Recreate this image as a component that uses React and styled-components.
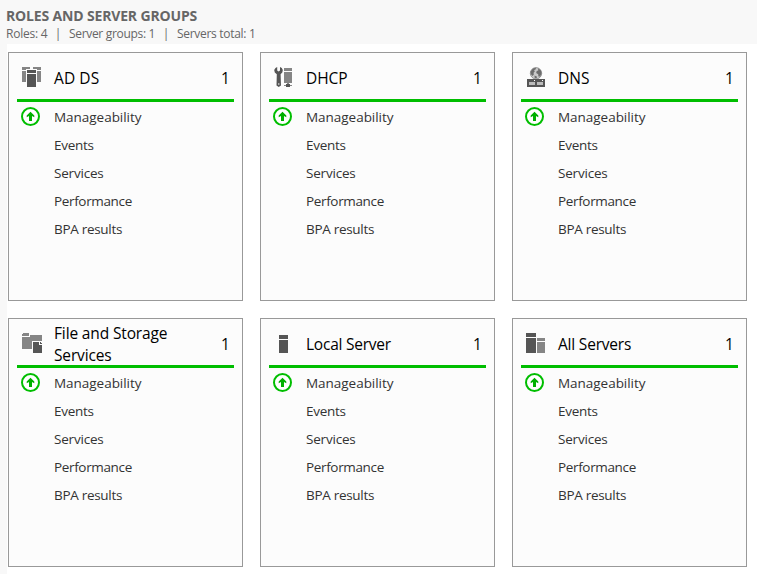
import React from "react";
import styled, { createGlobalStyle } from "styled-components";

const GlobalStyle = createGlobalStyle`
  * { box-sizing: border-box; }
  body {
    margin: 0;
    background: #f8f8f8;
    font-family: "Open Sans", "Noto Sans", sans-serif;
  }
`;

const Page = styled.main`
  width: 757px;
  height: 574px;
  display: flex;
  flex-direction: column;
  overflow: hidden;
`;

const Header = styled.header`
  height: 44px;
  flex: none;
  padding: 7px 0 0 6px;
  color: #666;
`;

const Heading = styled.h1`
  margin: 0;
  font-size: 14px;
  line-height: 18px;
  font-weight: 700;
  letter-spacing: -0.16px;
  white-space: nowrap;
`;

const Summary = styled.div`
  display: flex;
  font-size: 12px;
  line-height: 17px;
  white-space: nowrap;
`;

const Stat = styled.span`
  width: ${(p) => p.$width}px;
  letter-spacing: ${(p) => p.$spacing}px;
`;

const Divider = styled.span`
  width: 22px;
  text-align: center;
  font-size: 12px;
`;

const Board = styled.section`
  flex: 1;
  margin-left: 7px;
  padding: 8px 0 0 1px;
  background: #fff;
  display: grid;
  grid-template-columns: repeat(3, 235px);
  grid-auto-rows: 249px;
  gap: 17px;
  align-content: start;
`;

const Card = styled.article`
  border: 1px solid #999;
  background: #fcfcfc;
  padding: 0 8px;
`;

const CardHeader = styled.div`
  height: 49px;
  border-bottom: 3px solid #00be00;
  display: flex;
  align-items: center;
  color: #000;
  font-size: 15.5px;
  line-height: 22px;
`;

const IconSlot = styled.div`
  width: 37px;
  flex: none;
  padding-left: 4px;
  svg { display: block; }
`;

const RoleSlot = styled(IconSlot)`
  padding: 2px 0 0 5px;
`;

const CardTitle = styled.h2`
  flex: 1;
  margin: 4px 0 0;
  font-size: inherit;
  font-weight: 400;
  white-space: pre-line;
  letter-spacing: ${(p) => p.$spacing}px;
`;

const Count = styled.span`
  width: 13px;
  margin-top: 4px;
`;

const Rows = styled.ul`
  list-style: none;
  margin: 0;
  padding: 1px 0 0;
`;

const Row = styled.li`
  height: 28px;
  display: flex;
  align-items: center;
  color: #333;
  font-size: 13.5px;
  line-height: 20px;
`;

const RowLabel = styled.span`
  letter-spacing: ${(p) => p.$spacing}px;
`;

const Glyph = ({ children }) => (
  <svg width="21" height="22" viewBox="0 0 21 22" shapeRendering="crispEdges">{children}</svg>
);

const DirectoryIcon = () => (
  <Glyph>
    <path fill="#858585" d="M0 1h8v2H4v1H0zM11 1h8v3h-4V3h-4zM0 5h4v11H0zM15 5h4v11h-4z" />
    <path fill="#555" d="M5 4h9v3H5zM5 8h9v13H5z" />
  </Glyph>
);

const ToolsIcon = () => (
  <Glyph>
    <path
      fill="#555"
      shapeRendering="auto"
      d="M1.5 2 3.2 1v3.5l1.4.9L6 4.5V1l1.8 1L8.8 4 8.3 6.5 6.6 8.2 7 19.4 4.7 21 2.5 19.4 2.8 8.2.8 6.5.2 4z"
    />
    <circle cx="4.8" cy="18" r=".8" fill="#eee" shapeRendering="auto" />
    <path fill="#858585" d="M10 2h8v3h-8zM10 6h8v11h-8zM13 17h2v2h-2zM10 19h3v1h-3zM15 19h3v1h-3z" />
    <path fill="#555" d="M12 18h4v3h-4z" />
  </Glyph>
);

const GlobeIcon = () => (
  <Glyph>
    <circle cx="10" cy="7.3" r="5.7" fill="#c8c8c8" stroke="#858585" strokeWidth=".8" shapeRendering="auto" />
    <path
      fill="#6c6c6c"
      shapeRendering="auto"
      d="M4.6 5.5 7 2.5l3-.7-.4 1.8-1.5.5.7 1.4-1.2 1.2.2 2.1L6.3 10 4.8 8zM12 2.2l2.8 2 .8 3-1.4 3.2-1.8.2-.2-2.4-2-1.3.5-1.8 1.6-.6zM8.5 9.4l2.6 1.3-.6 1.6-1.8-.3z"
    />
    <path fill="#555" d="M1 13h18v8H1z" />
    <path fill="#bbb" d="M3 16h6v3H3zM11 16h6v3h-6z" />
    <path fill="#fff" d="M8 14h1v1H8zM16 14h1v1h-1z" />
  </Glyph>
);

const FolderIcon = () => (
  <Glyph>
    <path fill="#858585" d="M1 1h5l1 1v2H0V2zM8 3h11l1 1v5H10v8H0V5h8z" />
    <path fill="#555" d="M11 10h6v3h3v8h-9zM18 10l2 2h-2z" />
  </Glyph>
);

const ServerIcon = () => (
  <Glyph>
    <path fill="#555" d="M5 3h9v4H5zM5 8h9v13H5z" />
  </Glyph>
);

const ServersIcon = () => (
  <Glyph>
    <path fill="#555" d="M0 1h10v4H0zM0 6h10v15H0z" />
    <path fill="#858585" d="M11 6h8v3h-8zM11 10h8v11h-8z" />
  </Glyph>
);

const StatusIcon = () => (
  <svg width="20" height="20" viewBox="0 0 20 20">
    <circle cx="9.5" cy="9.5" r="8.5" fill="#fff" stroke="#00be00" strokeWidth="2" />
    <path fill="#00b000" d="M9.5 4.7 13.3 8.5v1.7L11 8.9V14H8V8.9l-2.3 1.3V8.5z" />
  </svg>
);

const groups = [
  { title: "AD DS", Icon: DirectoryIcon, spacing: 0.1 },
  { title: "DHCP", Icon: ToolsIcon, spacing: -0.05 },
  { title: "DNS", Icon: GlobeIcon, spacing: 0 },
  { title: "File and Storage\nServices", Icon: FolderIcon, spacing: -0.14 },
  { title: "Local Server", Icon: ServerIcon, spacing: -0.23 },
  { title: "All Servers", Icon: ServersIcon, spacing: -0.2 },
];

const labels = [
  { text: "Manageability", spacing: -0.03 },
  { text: "Events", spacing: -0.3 },
  { text: "Services", spacing: -0.2 },
  { text: "Performance", spacing: -0.35 },
  { text: "BPA results", spacing: -0.3 },
];

const GroupCard = ({ title, Icon, spacing }) => (
  <Card>
    <CardHeader>
      <RoleSlot><Icon /></RoleSlot>
      <CardTitle $spacing={spacing}>{title}</CardTitle>
      <Count>1</Count>
    </CardHeader>
    <Rows>
      {labels.map((label, i) => (
        <Row key={label.text}>
          <IconSlot>{i === 0 && <StatusIcon />}</IconSlot>
          <RowLabel $spacing={label.spacing}>{label.text}</RowLabel>
        </Row>
      ))}
    </Rows>
  </Card>
);

export default function App() {
  return (
    <Page>
      <GlobalStyle />
      <Header>
        <Heading>ROLES AND SERVER GROUPS</Heading>
        <Summary>
          <Stat $width={41} $spacing={-0.22}>Roles: 4</Stat>
          <Divider>|</Divider>
          <Stat $width={86} $spacing={-0.32}>Server groups: 1</Stat>
          <Divider>|</Divider>
          <Stat $width={80} $spacing={-0.3}>Servers total: 1</Stat>
        </Summary>
      </Header>
      <Board>
        {groups.map((group) => (
          <GroupCard key={group.title} {...group} />
        ))}
      </Board>
    </Page>
  );
}
